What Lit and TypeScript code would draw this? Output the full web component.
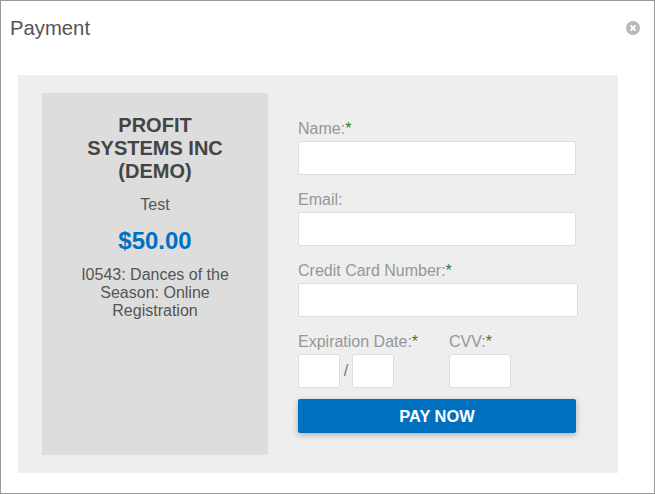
import { LitElement, html, css } from "lit";
import { customElement } from "lit/decorators.js";

@customElement("app-root")
export class AppRoot extends LitElement {
  static styles = css`
    :host { display: block; width: 655px; height: 494px; font-family: "Liberation Sans", Arial, sans-serif; }
    * { box-sizing: border-box; }
    .modal { width: 655px; height: 494px; border: 1px solid #999; background: #fff; display: flex; flex-direction: column; }
    .head { height: 74px; display: flex; justify-content: space-between; align-items: flex-start; padding: 15px 14px 0 9px; }
    .title { font-size: 20.3px; line-height: 24px; color: #555; }
    .close { margin-top: 5px; width: 14px; height: 14px; display: block; }
    .panel { margin-left: 17px; width: 600px; height: 398px; background: #eee; padding: 18px 0 18px 24px; display: flex; gap: 30px; }
    .card { width: 226px; height: 362px; background: #ddd; padding: 21px 20px 0; text-align: center; }
    .org { margin: 0; font-size: 20px; line-height: 23px; font-weight: bold; color: #444; padding: 0 16px; }
    .sub { font-size: 16px; line-height: 18px; color: #555; margin-top: 13px; }
    .price { font-size: 24px; line-height: 26px; font-weight: bold; color: #0070c0; margin-top: 14px; }
    .desc { font-size: 16px; line-height: 18px; color: #555; margin-top: 12px; }
    .form { display: flex; flex-direction: column; padding-top: 26px; width: 280px; }
    .field { height: 71px; display: flex; flex-direction: column; }
    label, .lab { display: block; font-size: 16px; line-height: 20px; height: 22px; color: #969696; }
    .req { color: #2e7d32; }
    .box { display: block; height: 34px; width: 278px; border: 1px solid #ddd; border-radius: 2px; background: #fff; padding: 0; outline: none; }
    .box.wide { width: 280px; }
    .row { display: flex; height: 67px; }
    .exp { width: 151px; }
    .pair { display: flex; align-items: center; }
    .box.small { width: 42px; }
    .box.cvv { width: 62px; }
    .slash { width: 12px; text-align: center; font-size: 16px; color: #777; }
    .pay { height: 34px; width: 278px; border: 0; border-radius: 2px; background: #0070c0; color: #fff; font: bold 16.4px "Liberation Sans", Arial, sans-serif; box-shadow: 0 2px 6px rgba(0,0,0,.28); padding: 0; }
  `;
  render() {
    return html`
      <div class="modal">
        <div class="head">
          <span class="title">Payment</span>
          <svg class="close" viewBox="0 0 14 14" aria-label="Close">
            <circle cx="7" cy="7" r="7" fill="#b8b8b8"></circle>
            <path d="M4.4 4.4l5.2 5.2M9.6 4.4l-5.2 5.2" stroke="#fff" stroke-width="2" fill="none"></path>
          </svg>
        </div>
        <div class="panel">
          <div class="card">
            <h2 class="org">PROFIT SYSTEMS INC (DEMO)</h2>
            <div class="sub">Test</div>
            <div class="price">$50.00</div>
            <div class="desc">I0543: Dances of the Season: Online Registration</div>
          </div>
          <div class="form">
            <div class="field"><label>Name:<span class="req">*</span></label><input class="box" /></div>
            <div class="field"><label>Email:</label><input class="box" /></div>
            <div class="field"><label>Credit Card Number:<span class="req">*</span></label><input class="box wide" /></div>
            <div class="row">
              <div class="exp">
                <div class="lab">Expiration Date:<span class="req">*</span></div>
                <div class="pair"><input class="box small" /><span class="slash">/</span><input class="box small" /></div>
              </div>
              <div>
                <div class="lab">CVV:<span class="req">*</span></div>
                <input class="box cvv" />
              </div>
            </div>
            <button class="pay">PAY NOW</button>
          </div>
        </div>
      </div>
    `;
  }
}
